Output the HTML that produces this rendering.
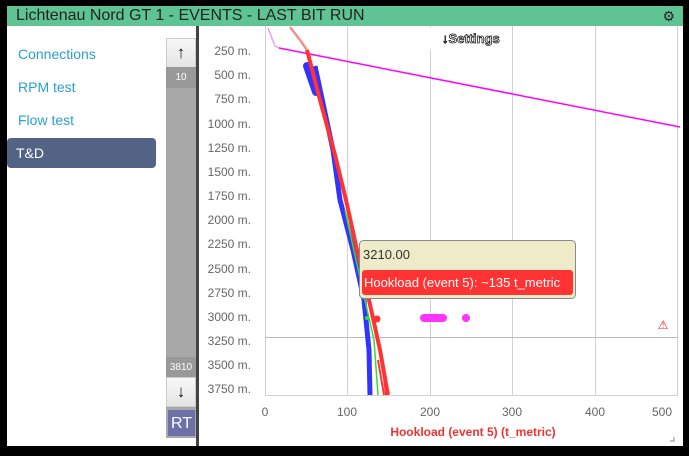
<!DOCTYPE html>
<html><head><meta charset="utf-8"><style>
*{margin:0;padding:0;box-sizing:border-box}
body{width:689px;height:456px;background:#000;position:relative;overflow:hidden;font-family:"Liberation Sans",sans-serif}
.hdr{position:absolute;left:7px;top:6px;width:676px;height:20px;background:#5ec493;color:#222;font-size:16px;line-height:20px;padding-left:9px}
.main{position:absolute;left:7px;top:26px;width:676px;height:420px;background:#fff}
.nav{position:absolute;left:11px;font-size:14px;color:#2a9fd6}
.td{position:absolute;left:0;top:112px;width:149px;height:30px;background:#536385;border-radius:4px;color:#fff;font-size:14px;line-height:30px;padding-left:9px}
.sb{position:absolute;left:159px;top:12px;width:30px;height:400px;background:#a8a8a8}
.btn{position:absolute;left:0;width:30px;height:30px;background:linear-gradient(#f8f8f8,#e4e4e4);border:1px solid #ccc;text-align:center;font-size:17px;line-height:28px;color:#111}
.band{position:absolute;left:0;width:30px;height:21px;background:#999;color:#fff;font-size:10px;text-align:center;line-height:21px}
.rt{position:absolute;left:160px;top:383px;width:29px;height:28px;background:#6e70a8;color:#fff;font-size:16px;text-align:center;line-height:28px;border:1px solid #aaa}
.vl{position:absolute;left:189px;top:0;width:3px;height:420px;background:#444}
</style></head><body>
<div class="hdr">Lichtenau Nord GT 1 - EVENTS - LAST BIT RUN<span style="position:absolute;right:8px;top:0;font-size:14px">⚙</span></div>
<div class="main">
<div class="nav" style="top:20px">Connections</div>
<div class="nav" style="top:53px">RPM test</div>
<div class="nav" style="top:86px">Flow test</div>
<div class="td">T&amp;D</div>
<div class="sb">
<div class="btn" style="top:0">↑</div>
<div class="band" style="top:29px">10</div>
<div class="band" style="top:319px">3810</div>
<div class="btn" style="top:339px">↓</div>
</div>
<div class="rt">RT</div>
<div class="vl"></div>
</div>
<svg style="position:absolute;left:0;top:0" width="689" height="456" font-family="Liberation Sans,sans-serif">
<g stroke="#d0d0d8" stroke-width="1">
<line x1="265.5" y1="26" x2="265.5" y2="395"/>
<line x1="347.5" y1="26" x2="347.5" y2="395"/>
<line x1="430.5" y1="26" x2="430.5" y2="395"/>
<line x1="512.5" y1="26" x2="512.5" y2="395"/>
<line x1="595.5" y1="26" x2="595.5" y2="395"/>
<line x1="677.5" y1="26" x2="677.5" y2="395"/>
<line x1="265" y1="395.5" x2="678" y2="395.5"/>
<line x1="265" y1="337.5" x2="678" y2="337.5" stroke="#bbb"/>
</g>
<rect x="430" y="28" width="82" height="22" fill="#fff"/>
<text x="442" y="43" font-size="13" font-weight="bold" fill="#fff" stroke="#222" stroke-width="0.8">↓Settings</text>
<g font-size="12" fill="#666" text-anchor="end">
<text x="251" y="55">250 m.</text><text x="251" y="79">500 m.</text><text x="251" y="103">750 m.</text>
<text x="251" y="128">1000 m.</text><text x="251" y="152">1250 m.</text><text x="251" y="176">1500 m.</text>
<text x="251" y="200">1750 m.</text><text x="251" y="224">2000 m.</text><text x="251" y="248">2250 m.</text>
<text x="251" y="273">2500 m.</text><text x="251" y="297">2750 m.</text><text x="251" y="321">3000 m.</text>
<text x="251" y="345">3250 m.</text><text x="251" y="369">3500 m.</text><text x="251" y="393">3750 m.</text>
</g>
<g font-size="12" fill="#666" text-anchor="middle">
<text x="265" y="416">0</text><text x="347" y="416">100</text><text x="430" y="416">200</text>
<text x="512" y="416">300</text><text x="595" y="416">400</text><text x="662" y="416">500</text>
</g>
<text x="473" y="436" font-size="12" font-weight="bold" fill="#e33" text-anchor="middle">Hookload (event 5) (t_metric)</text>
<polyline points="268,28 275,46 279,48" fill="none" stroke="#f39cf0" stroke-width="1.5"/>
<polyline points="279,48 680,127" fill="none" stroke="#f0f" stroke-width="1.5"/>
<polyline points="290,27 300,40 307,50" fill="none" stroke="#f09090" stroke-width="2.5"/>
<line x1="307" y1="66" x2="316" y2="92" stroke="#33f" stroke-width="8" stroke-linecap="round"/>
<polyline points="315,66 333,150 340,200 353,250 364,300 369,350 370,395" fill="none" stroke="#33f" stroke-width="5"/>
<polyline points="307,50 320,100 335,155 346,200 357,250 369,300 380,350 388,395" fill="none" stroke="#f33" stroke-width="4"/>
<polyline points="382,360 386,395" fill="none" stroke="#f33" stroke-width="2"/>
<polyline points="378,360 384,395" fill="none" stroke="#f33" stroke-width="2"/>
<polyline points="345,210 356,260 366,305 374,340 378,395" fill="none" stroke="#3d3" stroke-width="1.5"/>
<line x1="424" y1="318" x2="443" y2="318" stroke="#f3f" stroke-width="8" stroke-linecap="round"/>
<circle cx="466" cy="318" r="4" fill="#f3f"/>
<circle cx="377" cy="319" r="3.5" fill="#f33"/>
<circle cx="367" cy="318" r="2" fill="#3d3"/>
<rect x="359.5" y="240.5" width="216" height="58" rx="4" fill="#eeebc8" stroke="#888"/>
<text x="363" y="259" font-size="13" fill="#333">3210.00</text>
<rect x="362" y="270" width="211" height="25" rx="3" fill="#f33"/>
<text x="364" y="287" font-size="13" fill="#fff">Hookload (event 5): ~135 t_metric</text>
<text x="663" y="329" font-size="12" fill="#e22" text-anchor="middle">⚠</text>
<path d="M670 441h4v-4" stroke="#888" fill="none"/>
</svg>
</body></html>
